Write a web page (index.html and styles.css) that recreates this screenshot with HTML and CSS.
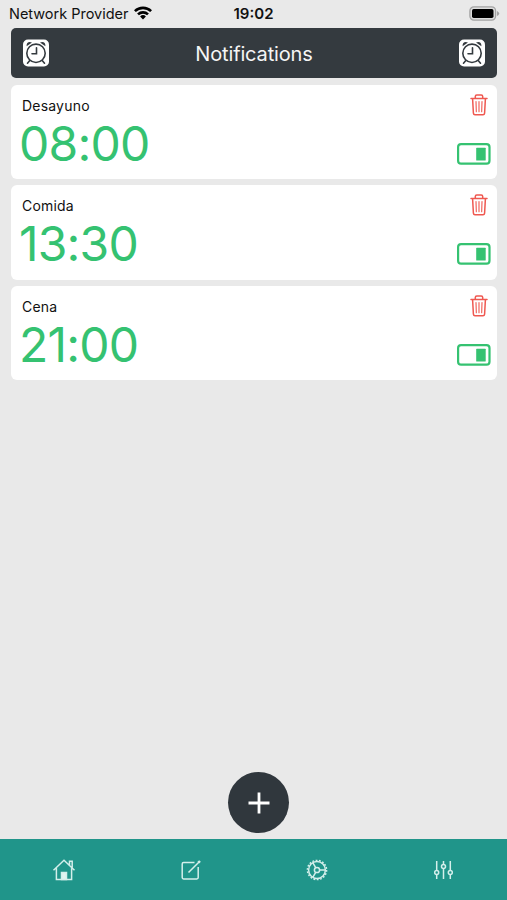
FILE: index.html
```html
<!DOCTYPE html>
<html lang="es">
<head>
<meta charset="utf-8">
<title>Notifications</title>
<link rel="stylesheet" href="styles.css">
</head>
<body>
<svg class="defs" aria-hidden="true">
  <symbol id="alarm" viewBox="0 0 26 28">
    <rect x="0" y="0.5" width="26" height="27" rx="5" fill="#fff"/>
    <g fill="none" stroke="#343a3f" stroke-width="1.6" stroke-linecap="round">
      <circle cx="13" cy="14.3" r="9.2"/>
      <path d="M13.5 8.8v6H9M6.8 21.5l-2.3 2.7M19.2 21.5l2.3 2.7"/>
    </g>
    <path d="M3.6 7.2C3.2 3.4 6.2 2 9 3.6zM22.4 7.2C22.8 3.4 19.8 2 17 3.6z" fill="#343a3f"/>
  </symbol>
  <symbol id="trash" viewBox="0 0 18 22">
    <g fill="none" stroke="#ef5850" stroke-width="1.5" stroke-linecap="round" stroke-linejoin="round">
      <path d="M1 4.5h16M5.3 4.3V2.5q0-1.5 1.5-1.5h4.4q1.5 0 1.5 1.5v1.8M2.6 4.8l.8 14.4q.2 1.6 1.6 1.6h8q1.4 0 1.6-1.6l.8-14.4"/>
      <path d="M6 7.6l.3 10.2M9 7.6v10.2M12 7.6l-.3 10.2" stroke-width="1.1"/>
    </g>
  </symbol>
  <symbol id="toggle" viewBox="0 0 34 22">
    <rect x="1.1" y="1.1" width="31.4" height="19.6" rx="3" fill="none" stroke="#35c271" stroke-width="2.2"/>
    <rect x="19.2" y="4.7" width="9.5" height="12.8" rx=".6" fill="#35c271"/>
  </symbol>
</svg>
<div class="screen">
  <div class="status">
    <div class="carrier"><span>Network Provider</span>
      <svg class="wifi" viewBox="0 0 18 14"><path d="M0 4.2a13 13 0 0 1 18 0l-1.8 1.9a10.3 10.3 0 0 0-14.4 0zM3.1 7.4a8.5 8.5 0 0 1 11.8 0l-1.8 1.9a5.9 5.9 0 0 0-8.2 0zM6.1 10.5a4.2 4.2 0 0 1 5.8 0L9 13.5z"/></svg>
    </div>
    <div class="clock">19:02</div>
    <svg class="battery" viewBox="0 0 31 15"><rect x=".9" y=".9" width="25.7" height="13.2" rx="4" fill="#ddd" stroke="#a3a3a3" stroke-width="1.3"/><rect x="3" y="3" width="21.5" height="9" rx="1.7"/><path d="M28 5q2.2 1 2.2 2.5T28 10z" fill="#a3a3a3"/></svg>
  </div>
  <header class="header">
    <svg class="alarm"><use href="#alarm"/></svg>
    <h1>Notifications</h1>
    <svg class="alarm"><use href="#alarm"/></svg>
  </header>
  <main class="list">
    <section class="card">
      <div><div class="label">Desayuno</div><div class="time">08:00</div></div>
      <div class="actions"><svg class="trash"><use href="#trash"/></svg><svg class="toggle"><use href="#toggle"/></svg></div>
    </section>
    <section class="card">
      <div><div class="label">Comida</div><div class="time">13:30</div></div>
      <div class="actions"><svg class="trash"><use href="#trash"/></svg><svg class="toggle"><use href="#toggle"/></svg></div>
    </section>
    <section class="card">
      <div><div class="label">Cena</div><div class="time">21:00</div></div>
      <div class="actions"><svg class="trash"><use href="#trash"/></svg><svg class="toggle"><use href="#toggle"/></svg></div>
    </section>
  </main>
  <div class="add"><svg viewBox="0 0 22 22"><path d="M11 .5v21M.5 11h21" stroke="#fff" stroke-width="2.8"/></svg></div>
  <nav class="tabs">
    <div><svg viewBox="0 0 24 24"><path d="M1.5 12.2L12 2.3l10.5 9.9M17.5 7V3.2h2.7v6.3M4.4 10.2v11.3h15.2V10.2"/><path d="M9.5 21.5v-7h5v7z" fill="#e2f4f1"/></svg></div>
    <div><svg viewBox="0 0 24 24"><path d="M16.5 4.5H5.6q-1.4 0-1.4 1.4v13.7q0 1.4 1.4 1.4h13.2q1.4 0 1.4-1.4V9M10.5 14.5L21.3 3.7"/><path d="M20.3 4.7l1.7-1.7" stroke-width="2.4"/></svg></div>
    <div><svg viewBox="0 0 24 24"><circle cx="12" cy="12" r="8.4"/><circle class="teeth" cx="12" cy="12" r="9.6"/><circle cx="12" cy="12" r="2.6"/><path d="M14.6 12h5.8M10.7 9.7L7.8 4.7M10.7 14.3l-2.9 5"/></svg></div>
    <div><svg viewBox="0 0 24 24"><path d="M5.7 3v9.4M5.7 16.6V21M12.5 3v3.4M12.5 10.6V21M19.3 3v9.4M19.3 16.6V21"/><circle cx="5.7" cy="14.5" r="2"/><circle cx="12.5" cy="8.5" r="2"/><circle cx="19.3" cy="14.5" r="2"/></svg></div>
  </nav>
</div>
</body>
</html>
```
FILE: styles.css
```css
* { box-sizing: border-box; }
body { margin: 0; background: #e9e9e9; font-family: Inter, "Liberation Sans", sans-serif; color: #111; }
svg { display: block; }
.defs { display: none; }
.screen { width: 507px; height: 900px; display: flex; flex-direction: column; }
.status { height: 28px; flex: none; display: grid; grid-template-columns: 1fr auto 1fr; align-items: center; padding: 0 7px 2px 9px; font-size: 14.5px; line-height: 18px; }
.carrier span { padding-top: 1px; }
.carrier { display: flex; align-items: center; gap: 6px; letter-spacing: -0.02px; }
.wifi { width: 18px; height: 14px; }
.clock { font-weight: 600; font-size: 15px; padding-top: 2px; margin-left: -2px; }
.battery { width: 31px; height: 15px; justify-self: end; }
.header { flex: none; height: 50px; margin: 0 10px 0 11px; padding: 0 12px; display: flex; align-items: center; justify-content: space-between; background: #343a3f; border-radius: 5px; }
.header h1 { margin: 0; padding-top: 2px; font-size: 20px; line-height: 24px; font-weight: 400; letter-spacing: -0.15px; color: #f5f5f5; }
.alarm { width: 26px; height: 28px; }
.list { flex: 1; display: flex; flex-direction: column; gap: 6px; padding: 6.5px 10px 0 11px; }
.card { height: 94.5px; display: flex; justify-content: space-between; background: #fff; border-radius: 6px; padding: 12px 6px 0 11px; }
.label { font-size: 14px; line-height: 18px; letter-spacing: 0.2px; }
.time { margin-left: -3px; font-size: 48px; line-height: 58px; font-weight: 400; letter-spacing: -0.8px; color: #35c271; }
.actions { display: flex; flex-direction: column; align-items: flex-end; gap: 27px; margin-top: -3px; }
.trash { width: 18px; height: 22px; margin-right: 3px; }
.toggle { width: 34px; height: 22px; }
.add { flex: none; width: 61px; height: 61px; margin: 0 0 6px 228px; display: flex; align-items: center; justify-content: center; background: #30373d; border-radius: 50%; }
.add svg { width: 22px; height: 22px; }
.tabs { flex: none; height: 61px; display: grid; grid-template-columns: repeat(4, 126.5px); background: #20958a; }
.tabs div { display: flex; align-items: center; justify-content: center; padding-left: 1px; }
.tabs svg { width: 24px; height: 24px; fill: none; stroke: #d4efeb; stroke-width: 1.5; }
.tabs .teeth { stroke-width: 1.5; stroke-dasharray: 1.8 1.551; }
```
